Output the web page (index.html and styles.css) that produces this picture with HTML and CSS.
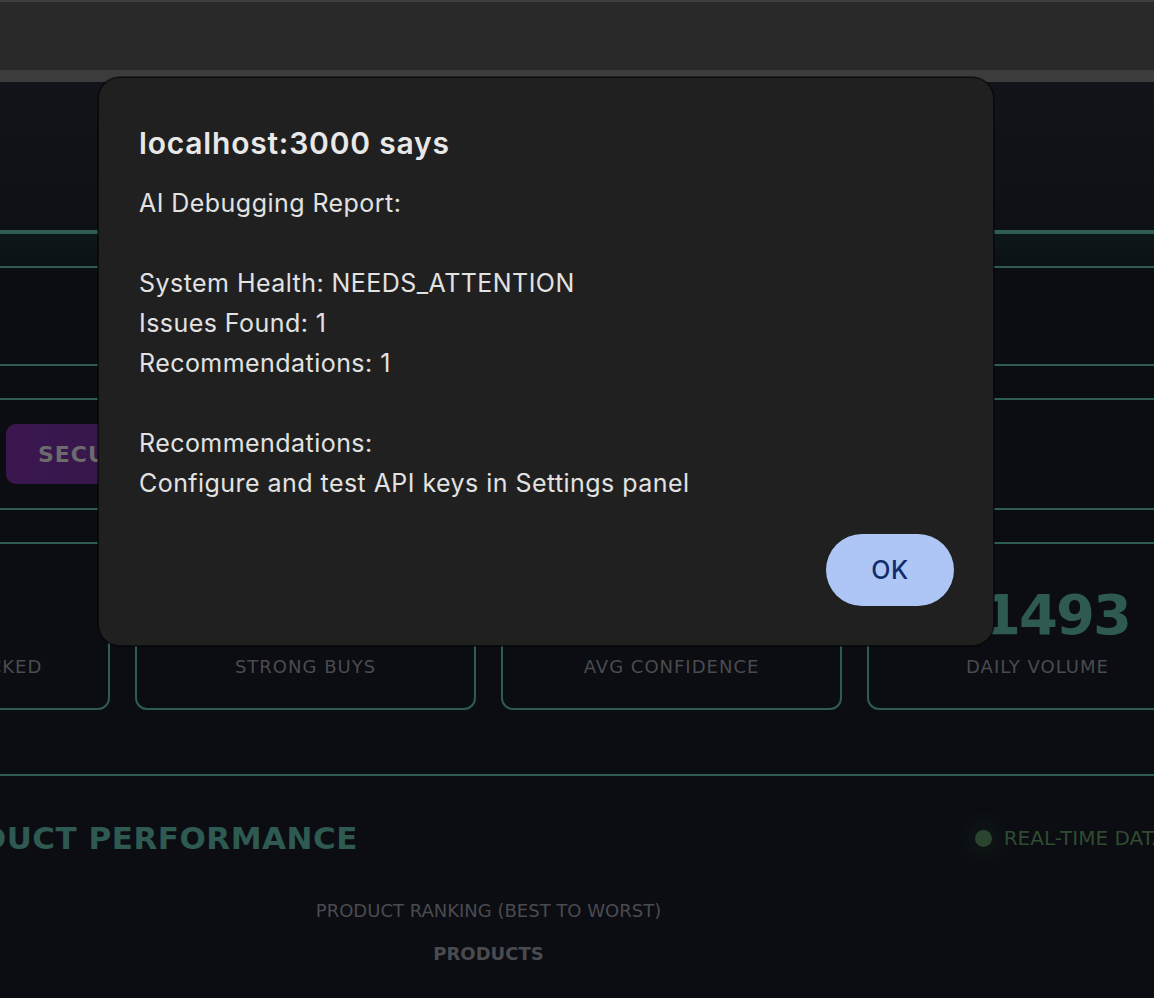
FILE: index.html
```html
<!DOCTYPE html>
<html lang="en">
<head>
<meta charset="utf-8">
<title>Dashboard</title>
<link rel="stylesheet" href="styles.css">
</head>
<body>
<div class="chrome">
  <div class="chrome-top"></div>
  <div class="chrome-strip"></div>
</div>
<main class="page">
  <header class="hero"></header>
  <div class="band band-thick"></div>
  <section class="panel"></section>
  <div class="band"></div>
  <section class="controls">
    <button class="ctl ctl-security">SECURITY SCAN</button>
  </section>
  <div class="band band-open"></div>
  <section class="stats">
    <div class="card"><div class="val">47</div><div class="lbl">PRODUCTS TRACKED</div></div>
    <div class="card"><div class="val">12</div><div class="lbl">STRONG BUYS</div></div>
    <div class="card"><div class="val">87%</div><div class="lbl">AVG CONFIDENCE</div></div>
    <div class="card"><div class="val">11493</div><div class="lbl">DAILY VOLUME</div></div>
  </section>
  <section class="perf">
    <div class="perf-head">
      <h2 class="perf-title">PRODUCT PERFORMANCE</h2>
      <div class="live"><span class="dot"></span>REAL-TIME DATA</div>
    </div>
    <div class="chart-title">PRODUCT RANKING (BEST TO WORST)</div>
    <div class="axis-title">PRODUCTS</div>
  </section>
</main>
<div class="dialog" role="alertdialog">
  <h1 class="dlg-title">localhost:3000 says</h1>
  <p class="dlg-msg">AI Debugging Report:

System Health: NEEDS_ATTENTION
Issues Found: 1
Recommendations: 1

Recommendations:
Configure and test API keys in Settings panel</p>
  <div class="dlg-actions"><button class="dlg-ok">OK</button></div>
</div>
</body>
</html>
```
FILE: styles.css
```css
* { box-sizing: border-box; }

html, body {
  margin: 0;
  padding: 0;
}

body {
  width: 1154px;
  height: 998px;
  overflow: hidden;
  background: #0b0d12;
  font-family: "DejaVu Sans", Verdana, sans-serif;
  position: relative;
}

/* top browser chrome */
.chrome-top {
  height: 70px;
  background: #292929;
  border-top: 2px solid #3e3e3e;
}
.chrome-strip {
  height: 12px;
  background: #3c3c3c;
}

/* page (horizontally scrolled so its left part is off-screen) */
.page {
  margin-left: -231px;
  width: 1439px;
}

.hero {
  height: 148px;
  background: linear-gradient(180deg, #111419 0%, #0d1015 100%);
}

.band {
  height: 36px;
  border-top: 2px solid #2e5b53;
  border-bottom: 2px solid #2e5b53;
  background: #0a0c11;
}
.band-thick {
  height: 38px;
  border-top-width: 4px;
  background: linear-gradient(180deg, #0d171a 0%, #0b1115 100%);
}
.band-open {
  height: 34px;
  border-bottom: none;
}

.panel {
  height: 96px;
  background: #0b0d12;
}

.controls {
  display: flex;
  gap: 16px;
  padding: 24px 0 24px 237px;
}
.ctl {
  height: 60px;
  width: 260px;
  border: none;
  border-radius: 10px;
  padding: 0 0 0 32px;
  text-align: left;
  white-space: nowrap;
  font-family: "DejaVu Sans", Verdana, sans-serif;
  font-weight: bold;
  font-size: 22px;
  letter-spacing: 1px;
  color: #6c6c6c;
}
.ctl-security {
  background: linear-gradient(90deg, #3b164f 0%, #301a46 100%);
}

.stats {
  display: grid;
  grid-template-columns: repeat(4, 341px);
  gap: 25px;
  padding-bottom: 64px;
}
.card {
  height: 168px;
  border: 2px solid #2e5b53;
  border-radius: 12px;
  background: #0b0d12;
  padding-top: 39px;
  text-align: center;
}
.val {
  font-size: 56px;
  line-height: 64px;
  font-weight: bold;
  letter-spacing: -2px;
  color: #2e5a52;
}
.lbl {
  margin-top: 8px;
  font-size: 18px;
  line-height: 24px;
  letter-spacing: 1px;
  color: #4a4b4f;
}

.perf {
  border-top: 2px solid #2e5b53;
  padding-top: 42px;
  height: 300px;
}
.perf-head {
  display: flex;
  align-items: center;
  justify-content: space-between;
  padding-left: 137px;
  padding-right: 42px;
}
.perf-title {
  margin: 0;
  font-size: 31px;
  line-height: 40px;
  font-weight: bold;
  letter-spacing: 0.5px;
  color: #2e5a52;
}
.live {
  display: flex;
  align-items: center;
  gap: 12px;
  font-size: 20px;
  color: #2f4c31;
}
.dot {
  width: 17px;
  height: 17px;
  border-radius: 50%;
  background: #2a4430;
  box-shadow: 0 0 22px 6px rgba(50, 90, 50, 0.18);
}
.chart-title {
  margin-top: 41px;
  text-align: center;
  font-size: 18px;
  line-height: 24px;
  color: #4a4b4f;
}
.axis-title {
  margin-top: 19px;
  text-align: center;
  font-size: 18px;
  line-height: 24px;
  font-weight: bold;
  color: #4a4b4f;
}

/* alert dialog (overlays page) */
.dialog {
  position: absolute;
  left: 98px;
  top: 77px;
  width: 896px;
  background: #202020;
  border: 1px solid #0c0c0c;
  border-radius: 22px;
  padding: 46px 39px 39px 40px;
  font-family: Inter, "Noto Sans", sans-serif;
  box-shadow: 0 0 0 1px rgba(0, 0, 0, 0.4);
}
.dlg-title {
  margin: 0 0 21px;
  font-size: 30px;
  line-height: 38px;
  font-weight: 600;
  letter-spacing: 0.8px;
  color: #e8e8e8;
}
.dlg-msg {
  margin: 0;
  white-space: pre-line;
  font-size: 25px;
  line-height: 40px;
  letter-spacing: 0.45px;
  color: #e2e2e2;
}
.dlg-actions {
  display: flex;
  justify-content: flex-end;
  margin-top: 31px;
}
.dlg-ok {
  width: 128px;
  height: 72px;
  border: none;
  border-radius: 36px;
  background: #adc6f6;
  color: #112c6c;
  font-family: Inter, "Noto Sans", sans-serif;
  font-size: 25px;
  font-weight: 500;
  letter-spacing: 0.5px;
}
```
